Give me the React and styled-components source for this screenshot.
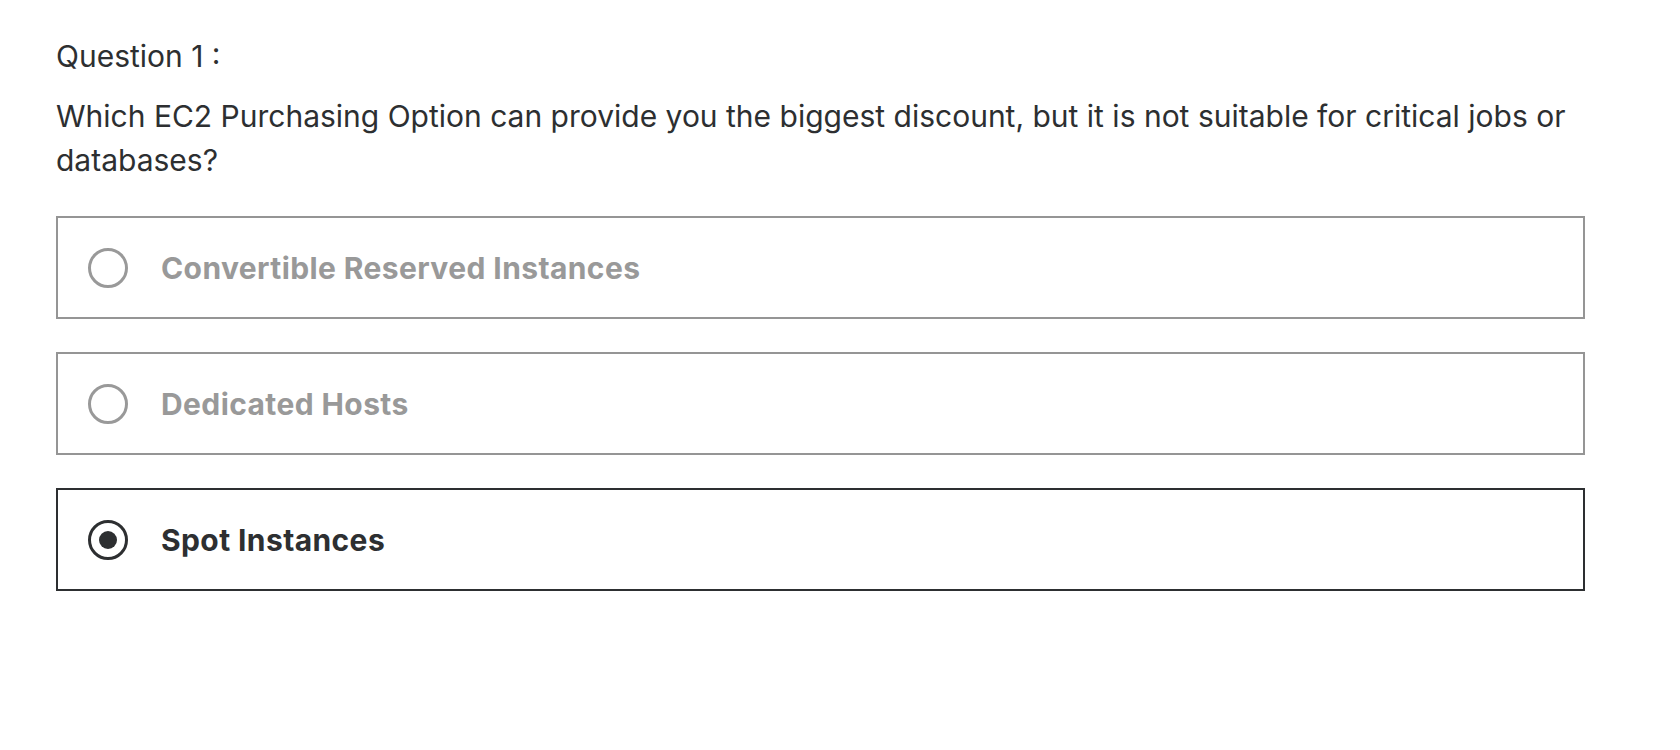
import styled, { createGlobalStyle } from "styled-components";

const GlobalStyle = createGlobalStyle`
  body {
    margin: 0;
    background: #fff;
    font-family: Inter, "Liberation Sans", Arial, sans-serif;
    color: #2d2f31;
  }
`;

const Page = styled.div`
  padding: 36px 95px 0 56px;
`;

const Label = styled.div`
  font-size: 30px;
  line-height: 40px;
  margin-bottom: 18px;
`;

const Prompt = styled.div`
  font-size: 30px;
  line-height: 44px;
  margin-bottom: 34px;
`;

const Options = styled.ul`
  list-style: none;
  margin: 0;
  padding: 0;
  display: flex;
  flex-direction: column;
  gap: 33px;
`;

const Option = styled.li`
  display: flex;
  align-items: center;
  gap: 33px;
  height: 103px;
  box-sizing: border-box;
  padding: 0 30px;
  border: 2px solid ${(p) => (p.$selected ? "#2d2f31" : "#959595")};
  color: ${(p) => (p.$selected ? "#2d2f31" : "#999999")};
  font-size: 30px;
  font-weight: 700;
  letter-spacing: 0.4px;
`;

const Radio = styled.span`
  width: 40px;
  height: 40px;
  box-sizing: border-box;
  border-radius: 50%;
  border: 3px solid currentColor;
  display: flex;
  align-items: center;
  justify-content: center;
  flex-shrink: 0;

  &::after {
    content: "";
    display: ${(p) => (p.$selected ? "block" : "none")};
    width: 18px;
    height: 18px;
    border-radius: 50%;
    background: currentColor;
  }
`;

const answers = [
  { text: "Convertible Reserved Instances", selected: false },
  { text: "Dedicated Hosts", selected: false },
  { text: "Spot Instances", selected: true },
];

export default function App() {
  return (
    <>
      <GlobalStyle />
      <Page>
        <Label>Question 1 :</Label>
        <Prompt>
          Which EC2 Purchasing Option can provide you the biggest discount, but it is not suitable for critical jobs or databases?
        </Prompt>
        <Options>
          {answers.map((a) => (
            <Option key={a.text} $selected={a.selected}>
              <Radio $selected={a.selected} />
              {a.text}
            </Option>
          ))}
        </Options>
      </Page>
    </>
  );
}
